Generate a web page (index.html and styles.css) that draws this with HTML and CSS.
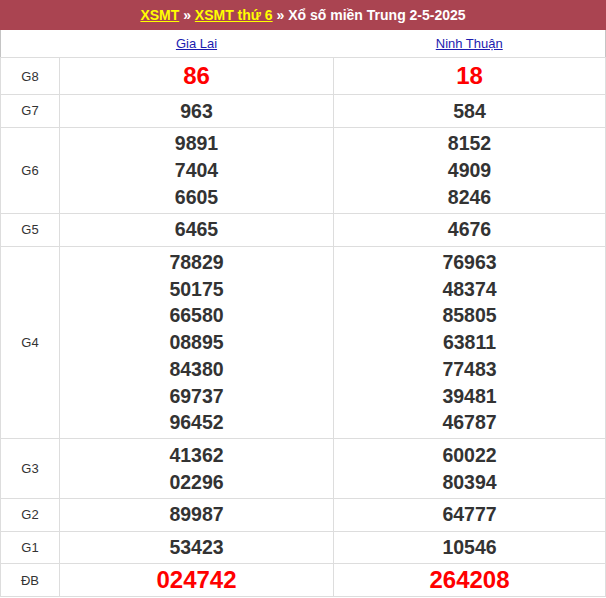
FILE: index.html
```html
<!DOCTYPE html>
<html lang="vi">
<head>
<meta charset="utf-8">
<title>XSMT 2-5-2025</title>
<link rel="stylesheet" href="styles.css">
</head>
<body>
<table class="kq">
  <colgroup>
    <col class="c-label">
    <col class="c-prov">
    <col class="c-prov2">
  </colgroup>
  <thead>
    <tr>
      <th class="title" colspan="3"><a href="#" class="ylink">XSMT</a> » <a href="#" class="ylink">XSMT thứ 6</a> » Xổ số miền Trung 2-5-2025</th>
    </tr>
    <tr class="provs">
      <th></th>
      <th><a href="#" class="plink">Gia Lai</a></th>
      <th><a href="#" class="plink">Ninh Thuận</a></th>
    </tr>
  </thead>
  <tbody>
    <tr class="g8">
      <td class="lbl">G8</td>
      <td class="nums"><div class="num red">86</div></td>
      <td class="nums"><div class="num red">18</div></td>
    </tr>
    <tr>
      <td class="lbl">G7</td>
      <td class="nums"><div class="num">963</div></td>
      <td class="nums"><div class="num">584</div></td>
    </tr>
    <tr>
      <td class="lbl">G6</td>
      <td class="nums"><div class="num">9891</div><div class="num">7404</div><div class="num">6605</div></td>
      <td class="nums"><div class="num">8152</div><div class="num">4909</div><div class="num">8246</div></td>
    </tr>
    <tr>
      <td class="lbl">G5</td>
      <td class="nums"><div class="num">6465</div></td>
      <td class="nums"><div class="num">4676</div></td>
    </tr>
    <tr>
      <td class="lbl">G4</td>
      <td class="nums"><div class="num">78829</div><div class="num">50175</div><div class="num">66580</div><div class="num">08895</div><div class="num">84380</div><div class="num">69737</div><div class="num">96452</div></td>
      <td class="nums"><div class="num">76963</div><div class="num">48374</div><div class="num">85805</div><div class="num">63811</div><div class="num">77483</div><div class="num">39481</div><div class="num">46787</div></td>
    </tr>
    <tr>
      <td class="lbl">G3</td>
      <td class="nums"><div class="num">41362</div><div class="num">02296</div></td>
      <td class="nums"><div class="num">60022</div><div class="num">80394</div></td>
    </tr>
    <tr>
      <td class="lbl">G2</td>
      <td class="nums"><div class="num">89987</div></td>
      <td class="nums"><div class="num">64777</div></td>
    </tr>
    <tr>
      <td class="lbl">G1</td>
      <td class="nums"><div class="num">53423</div></td>
      <td class="nums"><div class="num">10546</div></td>
    </tr>
    <tr class="db">
      <td class="lbl">ĐB</td>
      <td class="nums"><div class="num red">024742</div></td>
      <td class="nums"><div class="num red">264208</div></td>
    </tr>
  </tbody>
</table>
</body>
</html>
```
FILE: styles.css
```css
html, body {
  margin: 0;
  padding: 0;
  background: #fff;
}

body {
  font-family: "Liberation Sans", Arial, sans-serif;
  color: #333;
}

.kq {
  border-collapse: collapse;
  width: 606px;
  table-layout: fixed;
  border: 1px solid #c4c4c4;
}

.c-label { width: 59px; }
.c-prov { width: 274px; }

.kq th,
.kq td {
  padding: 0;
  text-align: center;
  vertical-align: middle;
}

.kq .title {
  background: #aa4451;
  border: 1px solid #aa4451;
  color: #fff;
  font-size: 14px;
  font-weight: bold;
  height: 28px;
}

.ylink {
  color: #ffff00;
  text-decoration: underline;
}

.kq .provs th {
  height: 27px;
  font-size: 13px;
  font-weight: normal;
  border-bottom: 1px solid #dddddd;
}

.plink {
  color: #1c1cb0;
  text-decoration: underline;
}

.kq tbody td {
  border: 1px solid #dddddd;
}

.kq .lbl {
  font-size: 13px;
  color: #333;
}

.kq .nums {
  padding: 2.5px 0;
}

.num {
  font-size: 19.5px;
  font-weight: bold;
  line-height: 26.7px;
  color: #333;
}

.num.red {
  color: #ff0000;
  font-size: 24px;
}

.kq .g8 .nums {
  height: 36px;
  padding: 0;
}

.kq .g8 .num {
  line-height: 36px;
}
```
